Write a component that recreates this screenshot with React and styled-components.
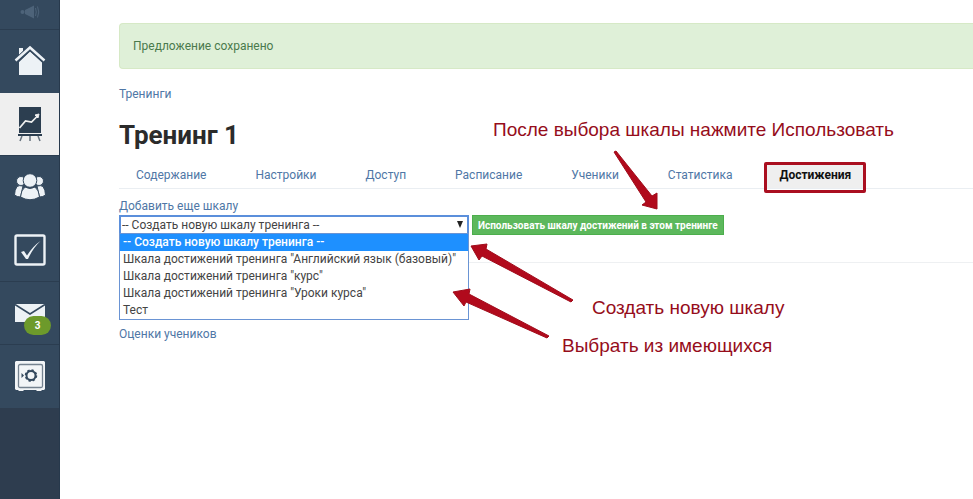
import { useState } from 'react';
import styled, { createGlobalStyle } from 'styled-components';

const GlobalStyle = createGlobalStyle`
  * {
    box-sizing: border-box;
  }

  body {
    margin: 0;
    background: #FFF;
    color: #333;
    font-family: Roboto, "Open Sans", sans-serif;
    font-size: 12px;
    line-height: 16px;
  }

  h1, ul {
    margin: 0;
    padding: 0;
  }

  a {
    color: #4F77A6;
    text-decoration: none;
  }
`;

const Page = styled.div`
  position: relative;
  display: flex;
  min-height: 100vh;
  overflow: hidden;
`;

const Sidebar = styled.nav`
  flex: 0 0 60px;
  background: #2E3D4F;
  border-right: 1px solid #27394C;
`;

const SideLink = styled.a`
  position: relative;
  display: flex;
  justify-content: center;
  align-items: center;
  height: ${({ $short }) => ($short ? '30px' : '63px')};
  padding-bottom: ${({ $short }) => ($short ? '6px' : '0')};
  border-bottom: 1px solid ${({ $line }) => ($line ? '#2B3D50' : 'transparent')};
  background: ${({ $active }) => ($active ? '#EFEFEF' : '#34495E')};
`;

const Badge = styled.span`
  position: absolute;
  right: 8px;
  bottom: 9px;
  width: 27px;
  border-radius: 10px;
  background: #6D9A2B;
  color: #FFF;
  font-size: 10px;
  font-weight: 700;
  line-height: 19px;
  text-align: center;
`;

const Main = styled.main`
  flex: 1;
  min-width: 0;
  padding: 23px 0 24px 59px;
`;

const Alert = styled.div`
  padding: 14px 13px;
  border: 1px solid #D6E9C6;
  border-right: 0;
  border-radius: 4px 0 0 4px;
  background: #DFF0D8;
  color: #4A7A4C;
`;

const Breadcrumb = styled.div`
  margin-top: 17px;
`;

const Title = styled.h1`
  margin-top: 17px;
  color: #2B2B2B;
  font-size: 26px;
  font-weight: 700;
  line-height: 32px;
`;

const Tabs = styled.ul`
  display: flex;
  gap: 15px;
  margin-top: 12px;
  border-bottom: 1px solid #EAEEF2;
  list-style: none;
`;

const Tab = styled.li`
  position: relative;

  a {
    display: block;
    padding: ${({ $active }) => ($active ? '4px 15px 5px' : '4px 17px 5px')};
    background: ${({ $active }) => ($active ? '#EFEFEF' : 'transparent')};
    color: ${({ $active }) => ($active ? '#111' : '#4F77A6')};
    font-weight: ${({ $active }) => ($active ? 700 : 400)};
  }
`;

const Frame = styled.span`
  position: absolute;
  inset: -1px 0 -5px;
  border: 3px solid #AA0F20;
  border-radius: 2px;
  pointer-events: none;
`;

const ScaleForm = styled.form`
  padding: 8px 0 27px;
  border-bottom: 1px solid #EEF0F2;

  label {
    display: block;
    color: #4F77A6;
    line-height: 18px;
  }
`;

const Controls = styled.div`
  display: flex;
  align-items: flex-start;
  gap: 3px;
`;

const Picker = styled.div`
  position: relative;
  width: 350px;
`;

const Select = styled.select`
  display: block;
  width: 100%;
  height: 20px;
  padding: 0 1px;
  border: 2px solid #5B8FDB;
  background: #FFF;
  color: #444;
  font: inherit;
  appearance: none;
  outline: none;
`;

const Caret = styled.svg`
  position: absolute;
  top: 6px;
  right: 5px;
  pointer-events: none;
`;

const Options = styled.ul`
  position: absolute;
  top: 18px;
  left: 0;
  right: 0;
  border: 1px solid #6A94D4;
  background: #FFF;
  list-style: none;
`;

const Option = styled.li`
  padding: 0 3px;
  background: ${({ $selected }) => ($selected ? '#1E90FF' : '#FFF')};
  color: ${({ $selected }) => ($selected ? '#FFF' : '#444')};
  font-weight: ${({ $selected }) => ($selected ? 500 : 400)};
  line-height: 17px;
  white-space: nowrap;
  cursor: default;
`;

const UseButton = styled.button`
  height: 20px;
  padding: 0 5px;
  border: 1px solid #4CAE4C;
  background: #5CB85C;
  color: #FFF;
  font-family: inherit;
  font-size: 10px;
  font-weight: 700;
  white-space: nowrap;
`;

const Marks = styled.p`
  margin: 63px 0 0;
`;

const Arrows = styled.svg`
  position: absolute;
  top: 0;
  left: 0;
  pointer-events: none;
`;

const Note = styled.span`
  position: absolute;
  top: ${({ $top }) => $top}px;
  left: ${({ $left }) => $left}px;
  color: #960D1B;
  font-family: "Liberation Sans", Arial, sans-serif;
  font-size: 19px;
  line-height: 20px;
  white-space: nowrap;
`;

const tabs = ['Содержание', 'Настройки', 'Доступ', 'Расписание', 'Ученики', 'Статистика', 'Достижения'];

const scales = [
  '-- Создать новую шкалу тренинга --',
  'Шкала достижений тренинга "Английский язык (базовый)"',
  'Шкала достижений тренинга "курс"',
  'Шкала достижений тренинга "Уроки курса"',
  'Тест',
];

function MegaphoneIcon() {
  return (
    <svg width="20" height="14" viewBox="0 0 20 14" fill="#4D6379">
      <circle cx="2.5" cy="7" r="2" />
      <path d="M5 5 14 .5v13L5 9z" />
      <path d="M15.5 3q1.500 4 0 8M17.5 1.500q2.500 5.500 0 11" fill="none" stroke="#4D6379" />
    </svg>
  );
}

function HomeIcon() {
  return (
    <svg width="32" height="32" viewBox="0 0 32 32">
      <path d="M5 3h4v3L5 10zM16 6.500 28 17v13H5V17z" fill="#EDF2F6" />
      <path d="M1.500 16.500 16 3l14.500 13.500" fill="none" stroke="#34495E" strokeWidth="5" />
      <path d="M1.500 15.500 16 2.500l14.500 13" fill="none" stroke="#EDF2F6" strokeWidth="2.500" />
    </svg>
  );
}

function BoardIcon() {
  return (
    <svg width="26" height="36" viewBox="0 0 26 36" fill="none">
      <path d="M2 1h22v26H2z" fill="#2C3E50" />
      <path d="m2.500 22 6-7 6 1 6-6" stroke="#EFEFEF" strokeWidth="1.700" />
      <path d="m22 8-4 1 3 3z" fill="#EFEFEF" stroke="#EFEFEF" />
      <path d="M1 29h24" stroke="#2C3E50" strokeWidth="2" />
      <path d="m5 30-2 5M13 30v5M21 30l2 5" stroke="#66727E" strokeWidth="1.500" />
    </svg>
  );
}

function UsersIcon() {
  return (
    <svg width="32" height="28" viewBox="0 0 32 28" fill="#EDF2F6" stroke="#34495E">
      <circle cx="7" cy="8" r="4.500" />
      <circle cx="25" cy="8" r="4.500" />
      <path d="M3 13.500Q5 12 9 13L6.500 24Q3 24 .500 22 .500 17 3 13.500zM29 13.500Q27 12 23 13l2.500 11q3.500 0 6-2 0-5-2.500-8.500z" />
      <path d="M11 14q5 3 10 0 4 3 4.500 10-9.500 5.500-19 0Q7 17 11 14z" />
      <circle cx="16" cy="7.500" r="6.800" />
    </svg>
  );
}

function CheckIcon() {
  return (
    <svg width="32" height="32" viewBox="0 0 32 32">
      <rect x="1.500" y="1.500" width="29" height="29" rx="1.500" fill="none" stroke="#EDF2F6" strokeWidth="2.400" />
      <path d="m7 18 3-1 3 4.500Q19 12 26.500 7 19 14 14 25h-2z" fill="#EDF2F6" />
    </svg>
  );
}

function MailIcon() {
  return (
    <svg width="30" height="20" viewBox="0 0 30 20">
      <path d="M0 1h30v18H0z" fill="#EDF2F6" />
      <path d="m0 1.500 15 9.500 15-9.500" fill="none" stroke="#34495E" strokeWidth="1.500" />
    </svg>
  );
}

function SafeIcon() {
  return (
    <svg width="32" height="32" viewBox="0 0 32 32">
      <path d="M2 1h28l1 1v27l-1 1h-2l-1 1h-4l-1-1H10l-1 1H5l-1-1H2l-1-1V2z" fill="#F2F5F7" />
      <rect x="4.500" y="4.500" width="24" height="23" rx="1.500" fill="none" stroke="#74828F" strokeWidth="1.300" />
      <circle cx="17" cy="15.500" r="4.500" fill="none" stroke="#34495E" strokeWidth="2" />
      <circle cx="17" cy="15.500" r="5.500" fill="none" stroke="#34495E" strokeWidth="1.500" strokeDasharray="2.300 2" />
      <path d="M7.500 13v5l2.500-2.500z" fill="#34495E" />
    </svg>
  );
}

export default function App() {
  const [scale, setScale] = useState(scales[0]);

  return (
    <Page>
      <GlobalStyle />
      <Sidebar>
        <SideLink href="#news" aria-label="Новости" $short $line>
          <MegaphoneIcon />
        </SideLink>
        <SideLink href="#home" aria-label="Главная">
          <HomeIcon />
        </SideLink>
        <SideLink href="#trainings" aria-label="Тренинги" $active $line>
          <BoardIcon />
        </SideLink>
        <SideLink href="#users" aria-label="Пользователи">
          <UsersIcon />
        </SideLink>
        <SideLink href="#tasks" aria-label="Задачи" $line>
          <CheckIcon />
        </SideLink>
        <SideLink href="#messages" aria-label="Сообщения" $line>
          <MailIcon />
          <Badge>3</Badge>
        </SideLink>
        <SideLink href="#safe" aria-label="Сейф">
          <SafeIcon />
        </SideLink>
      </Sidebar>
      <Main>
        <Alert role="status">Предложение сохранено</Alert>
        <Breadcrumb>
          <a href="#trainings">Тренинги</a>
        </Breadcrumb>
        <Title>Тренинг 1</Title>
        <Tabs>
          {tabs.map((tab) => {
            const active = tab === 'Достижения';
            return (
              <Tab key={tab} $active={active}>
                <a href={`#${tab}`}>{tab}</a>
                {active && <Frame />}
              </Tab>
            );
          })}
        </Tabs>
        <ScaleForm onSubmit={(e) => e.preventDefault()}>
          <label htmlFor="scale">Добавить еще шкалу</label>
          <Controls>
            <Picker>
              <Select id="scale" value={scale} onChange={(e) => setScale(e.target.value)}>
                {scales.map((name) => (
                  <option key={name} value={name}>{name}</option>
                ))}
              </Select>
              <Caret width="8" height="8" viewBox="0 0 8 8">
                <path d="M1 0h6L4 7z" fill="#222" />
              </Caret>
              <Options role="listbox" aria-label="Шкалы">
                {scales.map((name) => (
                  <Option
                    key={name}
                    role="option"
                    aria-selected={name === scale}
                    $selected={name === scale}
                    onClick={() => setScale(name)}
                  >
                    {name}
                  </Option>
                ))}
              </Options>
            </Picker>
            <UseButton type="submit">Использовать шкалу достижений в этом тренинге</UseButton>
          </Controls>
        </ScaleForm>
        <Marks>
          <a href="#marks">Оценки учеников</a>
        </Marks>
      </Main>
      <Arrows width="973" height="499" viewBox="0 0 973 499" fill="#B10A1C" stroke="#A00C1B" strokeLinejoin="round">
        <path d="m616 151 36 45 5-3v16l-15-4 4-3-32-50z" />
        <path d="m471 246 16-2-1 5 87 51-2 2-89-46-3 4z" />
        <path d="m453 292 17-3-1 5 80 42-2 2-81-36-2 4z" />
      </Arrows>
      <Note $top={120} $left={493}>После выбора шкалы нажмите Использовать</Note>
      <Note $top={298} $left={592}>Создать новую шкалу</Note>
      <Note $top={336} $left={562}>Выбрать из имеющихся</Note>
    </Page>
  );
}
